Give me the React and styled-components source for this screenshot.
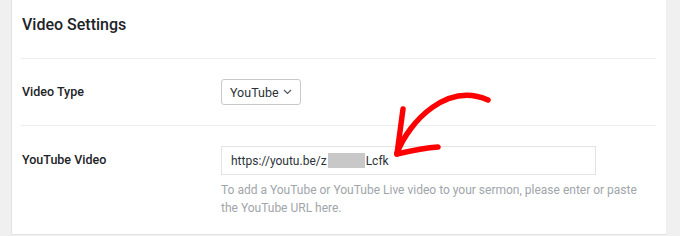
import React from 'react';
import styled, {createGlobalStyle} from 'styled-components';

const GlobalStyle = createGlobalStyle`
  html, body {
    margin: 0;
    padding: 0;
    background: #f0f0f1;
  }
  body {
    font-family: Roboto, 'Liberation Sans', sans-serif;
    color: #1d2327;
  }
`;

const Page = styled.div`
  position: relative;
  width: 680px;
  height: 236px;
  overflow: hidden;
  padding-left: 11px;
  box-sizing: border-box;
`;

const Panel = styled.div`
  width: 655px;
  height: 235px;
  box-sizing: border-box;
  background: #fff;
  border: 1px solid #e2e2e4;
  border-top: none;
  border-right: none;
  padding: 0 10px 0 9px;
`;

const Header = styled.div`
  height: 59px;
  display: flex;
  align-items: center;
  padding-left: 1px;
  padding-bottom: 10px;
  box-sizing: border-box;
  border-bottom: 1px solid #ececec;
  h2 {
    margin: 0;
    font-size: 16px;
    font-weight: 500;
    color: #1d2327;
  }
`;

const Row = styled.div`
  display: grid;
  grid-template-columns: 200px 1fr;
  align-items: ${p => (p.$top ? 'start' : 'center')};
  padding: 20px 0 ${p => (p.$top ? '16px' : '20px')};
  border-bottom: ${p => (p.$last ? 'none' : '1px solid #ececec')};
`;

const Label = styled.label`
  padding-left: 1px;
  font-size: 12.5px;
  font-weight: 500;
  color: #1d2327;
  margin-top: ${p => (p.$top ? '6px' : '-2px')};
`;

const Select = styled.div`
  display: inline-flex;
  align-items: center;
  justify-content: space-between;
  width: 80px;
  height: 26px;
  box-sizing: border-box;
  padding: 0 8px 0 8px;
  border: 1px solid #c9c9cc;
  border-radius: 3px;
  font-size: 12.5px;
  color: #2c3338;
  justify-self: start;
`;

const Input = styled.div`
  width: 375px;
  height: 29px;
  box-sizing: border-box;
  border: 1px solid #e3e3e3;
  display: flex;
  align-items: center;
  padding-left: 9px;
  font-size: 12px;
  color: #2c3338;
`;

const Redacted = styled.span`
  display: inline-block;
  width: 37px;
  height: 15px;
  background: #c8c8c8;
  margin: 0 1px 0 1px;
`;

const Help = styled.p`
  margin: 6px 0 0;
  font-size: 12px;
  line-height: 18px;
  color: #a0a5aa;
  max-width: 430px;
`;

const Arrow = styled.svg`
  position: absolute;
  left: 0;
  top: 0;
  pointer-events: none;
`;

export default function App() {
  return (
    <Page>
      <GlobalStyle />
      <Panel>
        <Header>
          <h2>Video Settings</h2>
        </Header>
        <Row>
          <Label>Video Type</Label>
          <Select>
            YouTube
            <svg width="9" height="6" viewBox="0 0 9 6">
              <path d="M1 1l3.5 3.5L8 1" fill="none" stroke="#50575e" strokeWidth="1.2" />
            </svg>
          </Select>
        </Row>
        <Row $top $last>
          <Label $top>YouTube Video</Label>
          <div>
            <Input>
              https://youtu.be/z<Redacted />Lcfk
            </Input>
            <Help>
              To add a YouTube or YouTube Live video to your sermon, please enter or paste the YouTube URL here.
            </Help>
          </div>
        </Row>
      </Panel>
      <Arrow width="680" height="236" viewBox="0 0 680 236">
        <g fill="none" stroke="#ff0000" strokeLinecap="round" strokeLinejoin="round">
          <path d="M397 153 C410 120, 448 82, 488 100" strokeWidth="5.5" />
          <path d="M403 109 C401 125, 399 140, 397 154" strokeWidth="5.5" />
          <path d="M397 154 C410 151, 424 148, 438 147" strokeWidth="5.5" />
        </g>
      </Arrow>
    </Page>
  );
}
